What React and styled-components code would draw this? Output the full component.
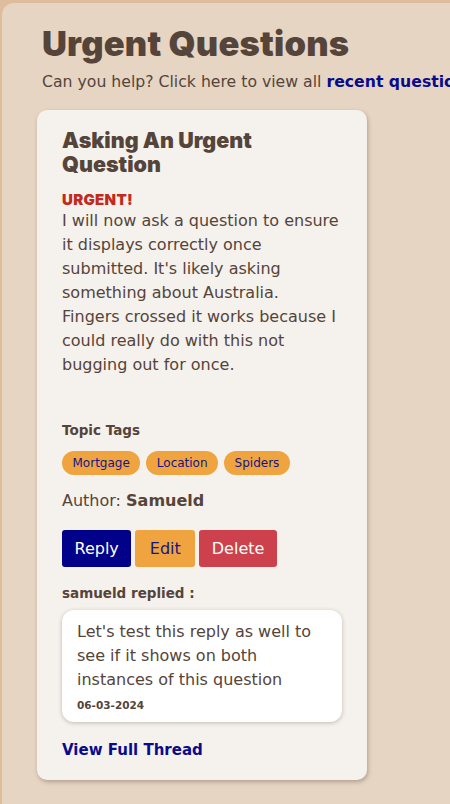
import React from "react";
import styled, { createGlobalStyle } from "styled-components";

const Global = createGlobalStyle`
  html, body { margin: 0; padding: 0; }
  body {
    background: #dfbc9c;
    font-family: "DejaVu Sans", "Open Sans", sans-serif;
    color: #55443a;
    overflow: hidden;
  }
  #root { min-height: 804px; }
`;

const Panel = styled.main`
  margin: 3px 0 0 2px;
  background: #e6d5c3;
  border-radius: 12px 0 0 0;
  min-height: 801px;
  padding: 20px 0 0 40px;
  box-sizing: border-box;
  overflow: hidden;
`;

const Title = styled.h1`
  margin: 0;
  font-family: Inter, "DejaVu Sans", sans-serif;
  font-weight: 900;
  font-size: 34.5px;
  line-height: 42px;
  color: #55443a;
  letter-spacing: 0.2px;
`;

const Sub = styled.p`
  margin: 6px 0 0;
  font-size: 15.7px;
  line-height: 22px;
  white-space: nowrap;
`;

const Strong = styled.a`
  color: #0a0a8c;
  font-weight: 700;
  text-decoration: none;
`;

const Card = styled.article`
  margin: 17px 0 0 -5px;
  width: 330px;
  box-sizing: border-box;
  background: #f5f1ec;
  border-radius: 10px;
  box-shadow: 1px 2px 4px rgba(80, 60, 40, 0.35);
  padding: 18px 25px 20px;
`;

const CardTitle = styled.h2`
  margin: 0;
  font-family: Inter, "DejaVu Sans", sans-serif;
  font-weight: 900;
  font-size: 21.5px;
  line-height: 24px;
`;

const Urgent = styled.div`
  margin-top: 15px;
  font-family: Inter, "DejaVu Sans", sans-serif;
  font-weight: 900;
  font-size: 15px;
  line-height: 18px;
  color: #c22a1e;
  letter-spacing: 0.3px;
`;

const Body = styled.p`
  margin: 0;
  padding-right: 2px;
  font-size: 16px;
  line-height: 24px;
`;

const Label = styled.div`
  margin-top: ${(p) => p.$mt || 0}px;
  font-weight: 700;
  font-size: 13.5px;
  line-height: 18px;
`;

const Tags = styled.div`
  display: flex;
  gap: 6px;
  margin-top: 12px;
`;

const Tag = styled.span`
  background: #efa440;
  color: #14148a;
  font-size: 12px;
  line-height: 24px;
  padding: 0 10.5px;
  border-radius: 12px;
`;

const Author = styled.div`
  margin-top: 15px;
  font-size: 16px;
  line-height: 22px;
`;

const Buttons = styled.div`
  display: flex;
  gap: 4px;
  margin-top: 18px;
`;

const Btn = styled.button`
  font-family: inherit;
  font-size: 16px;
  border: none;
  border-radius: 3px;
  height: 37px;
  padding: 0 ${(p) => p.$px || 12.5}px;
  background: ${(p) => p.$bg};
  color: ${(p) => p.$fg};
`;

const ReplyBox = styled.div`
  margin-top: 8px;
  background: #ffffff;
  border-radius: 12px;
  box-shadow: 0 1px 4px rgba(80, 60, 40, 0.3);
  padding: 10px 15px 10px;
`;

const ReplyText = styled.p`
  margin: 0;
  font-size: 16px;
  line-height: 24px;
`;

const Date = styled.div`
  margin-top: 6px;
  font-weight: 700;
  font-size: 10.5px;
  line-height: 14px;
`;

const Thread = styled.a`
  display: block;
  margin-top: 18px;
  color: #0a0a8c;
  font-weight: 700;
  font-size: 15px;
  line-height: 20px;
  text-decoration: none;
`;

export default function App() {
  return (
    <>
      <Global />
      <Panel>
        <Title>Urgent Questions</Title>
        <Sub>
          Can you help? Click here to view all <Strong href="#">recent questions</Strong>
        </Sub>
        <Card>
          <CardTitle>Asking An Urgent Question</CardTitle>
          <Urgent>URGENT!</Urgent>
          <Body>
            I will now ask a question to ensure it displays correctly once submitted. It's
            likely asking something about Australia. Fingers crossed it works because I could
            really do with this not bugging out for once.
          </Body>
          <Label $mt={44}>Topic Tags</Label>
          <Tags>
            <Tag>Mortgage</Tag>
            <Tag>Location</Tag>
            <Tag>Spiders</Tag>
          </Tags>
          <Author>
            Author: <b>Samueld</b>
          </Author>
          <Buttons>
            <Btn $bg="#01018a" $fg="#ffffff">Reply</Btn>
            <Btn $bg="#efa440" $fg="#14148a" $px={14.5}>Edit</Btn>
            <Btn $bg="#cc414b" $fg="#ffffff">Delete</Btn>
          </Buttons>
          <Label $mt={17}>samueld replied :</Label>
          <ReplyBox>
            <ReplyText>
              Let's test this reply as well to see if it shows on both instances of this
              question
            </ReplyText>
            <Date>06-03-2024</Date>
          </ReplyBox>
          <Thread href="#">View Full Thread</Thread>
        </Card>
      </Panel>
    </>
  );
}
